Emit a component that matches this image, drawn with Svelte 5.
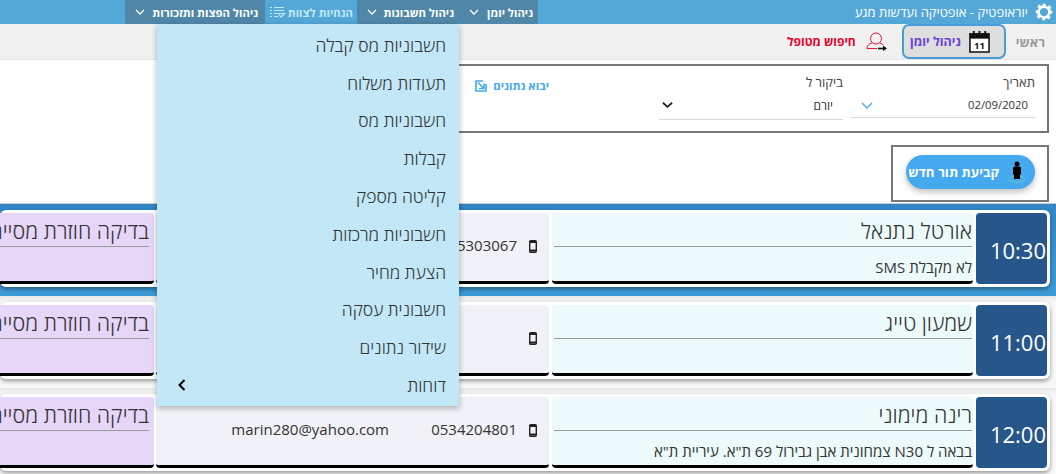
<script>
  const tabs = [
    { label: 'ניהול יומן', w: 79 },
    { label: 'ניהול חשבונות', w: 102 },
    { label: 'הנחיות לצוות', w: 92, light: true },
    { label: 'ניהול הפצות ותזכורות', w: 140 }
  ];
  const menu = ['חשבוניות מס קבלה','תעודות משלוח','חשבוניות מס','קבלות','קליטה מספק','חשבוניות מרכזות','הצעת מחיר','חשבונית עסקה','שידור נתונים','דוחות'];
  const rows = [
    { time: '10:30', name: 'אורטל נתנאל', note: 'לא מקבלת SMS', phone: '0545303067', mail: '', active: true },
    { time: '11:00', name: 'שמעון טייג', note: '', phone: '', mail: '' },
    { time: '12:00', name: 'רינה מימוני', note: 'בבאה ל N30 צמחונית אבן גבירול 69 ת"א. עיריית ת"א', phone: '0534204801', mail: 'marin280@yahoo.com' }
  ];
</script>

<div class="page">
  <header class="top">
    <div class="brand">
      <svg class="gear" viewBox="0 0 24 24" width="18" height="18"><path fill="#fff" fill-rule="evenodd" d="M10 1h4l.6 3.1 1.9.8 2.6-1.8 2.8 2.8-1.8 2.6.8 1.9L23 10v4l-3.1.6-.8 1.9 1.8 2.6-2.8 2.8-2.6-1.8-1.9.8L14 23h-4l-.6-3.1-1.9-.8-2.6 1.8-2.8-2.8 1.8-2.6-.8-1.9L1 14v-4l3.1-.6.8-1.9-1.8-2.6 2.8-2.8 2.6 1.8 1.9-.8zM12 6.500a5.500 5.500 0 1 0 0 11 5.500 5.500 0 0 0 0-11z"/></svg>
      <span>יוראופטיק - אופטיקה ועדשות מגע</span>
    </div>
    <nav class="tabs">
      {#each tabs as t}
        <div class="tab" class:light={t.light} style="width:{t.w}px">
          <span>{t.label}</span>
          {#if t.light}
            <svg viewBox="0 0 16 12" width="16" height="12"><path d="M0 1.5h2M4 1.5h10M0 4.5h2M4 4.5h10M0 7.5h2M4 7.5h10M0 10.5h2M4 10.5h4M9 9l2 2 4-4" fill="none" stroke="#c2e8f8" stroke-width="1.2"/></svg>
          {:else}
            <svg viewBox="0 0 10 6" width="10" height="6"><path d="M1 1l4 4 4-4" fill="none" stroke="#fff" stroke-width="1.3"/></svg>
          {/if}
        </div>
      {/each}
    </nav>
  </header>

  <div class="sub">
    <span class="home">ראשי</span>
    <div class="diary">
      <svg viewBox="0 0 22 24" width="21" height="23"><rect x="1" y="4" width="20" height="19" fill="#fff" stroke="#111" stroke-width="1.6"/><rect x="1" y="4" width="20" height="5" fill="#111"/><path d="M5 1v5M11 1v5M17 1v5" stroke="#111" stroke-width="2"/><text x="11" y="20" font-size="10" font-weight="700" text-anchor="middle" fill="#111" font-family="Open Sans">11</text></svg>
      <span>ניהול יומן</span>
    </div>
    <div class="find">
      <svg viewBox="0 0 21 19" width="21" height="19"><circle cx="10" cy="6.500" r="5.500" fill="none" stroke="#e8123c" stroke-width="1"/><path d="M1 16.500c0-3 2-4.500 5-5.500M14 11c1.500.5 2.500 1 3.500 2M1 16.500h10" fill="none" stroke="#e8123c" stroke-width="1"/><path d="M12 16.500h6" stroke="#111" stroke-width="1.600"/><path d="M17 13.500l4 3-4 2.500z" fill="#111"/></svg>
      <span>חיפוש מטופל</span>
    </div>
  </div>

  <section class="filter">
    <div class="field date">
      <label for="d">תאריך</label>
      <div class="val"><span class="ltr">02/09/2020</span><svg viewBox="0 0 12 7" width="12" height="7"><path d="M1 1l5 5 5-5" fill="none" stroke="#4aa8ec" stroke-width="1.400"/></svg></div>
    </div>
    <div class="field visit">
      <label for="d">ביקור ל</label>
      <div class="val"><span>יורם</span><svg viewBox="0 0 12 8" width="11" height="8"><path d="M1 1.500l5 4.500 5-4.500" fill="none" stroke="#222" stroke-width="2"/></svg></div>
    </div>
    <div class="import">
      <span>יבוא נתונים</span>
      <svg viewBox="0 0 12 12" width="12" height="12"><path d="M8 1H1v10h10V4" fill="none" stroke="#45a9f0" stroke-width="1.600"/><path d="M3 2.500l5.500 5.500M9 3.500v5H4" fill="none" stroke="#45a9f0" stroke-width="1.600"/></svg>
    </div>
  </section>

  <section class="newbox">
    <div class="pill">
      <svg viewBox="0 0 18 22" width="18" height="22"><ellipse cx="9" cy="18" rx="8" ry="3" fill="none" stroke="#6ec6c0" stroke-width=".8"/><circle cx="9" cy="3" r="2.500" fill="#000"/><path d="M5 7q0-1.500 2-1.500h4q2 0 2 1.500v6l-1 1v4H6v-4l-1-1z" fill="#000"/></svg>
      <span>קביעת תור חדש</span>
    </div>
  </section>

  <div class="list">
    {#each rows as r}
      <div class="row" class:active={r.active}>
        <div class="card">
          <div class="time">{r.time}</div>
          <div class="cell name">
            <div class="title">{r.name}</div>
            <div class="note">{r.note}</div>
          </div>
          <div class="cell contact">
            <svg viewBox="0 0 8 13" width="8" height="13"><rect x=".7" y=".7" width="6.600" height="11.600" rx="1" fill="none" stroke="#222" stroke-width="1.400"/><path d="M1 2h6M1 10.500h6" stroke="#222" stroke-width="1.800"/></svg>
            <span class="phone">{r.phone}</span>
            <span class="mail">{r.mail}</span>
          </div>
          <div class="cell kind">
            <div class="title">בדיקה חוזרת מסיים</div>
          </div>
        </div>
      </div>
    {/each}
  </div>

  <div class="menu">
    {#each menu as m, i}
      <div class="item">
        <span>{m}</span>
        {#if i === menu.length - 1}
          <svg viewBox="0 0 8 12" width="8" height="12"><path d="M6.500 1L1.500 6l5 5" fill="none" stroke="#000" stroke-width="2"/></svg>
        {/if}
      </div>
    {/each}
  </div>
</div>

<style>
  :global(body) { margin: 0; overflow: hidden; background: #fff; }
  .page {
    position: relative;
    width: 1056px;
    height: 474px;
    overflow: hidden;
    direction: rtl;
    font-family: "Open Sans", "Liberation Sans", "DejaVu Sans", sans-serif;
    color: #333;
  }
  .top {
    height: 24px;
    background: #54a8d8;
    display: flex;
    justify-content: space-between;
    align-items: stretch;
  }
  .brand {
    display: flex;
    align-items: center;
    gap: 7px;
    padding-right: 3px;
    color: #fff;
    font-size: 13px;
  }
  .tabs { display: flex; margin-left: 125px; }
  .tab {
    box-sizing: border-box;
    display: flex;
    align-items: center;
    justify-content: space-between;
    padding: 0 5px 0 10px;
    background: #5087a8;
    color: #fff;
    font-size: 11.3px;
    font-weight: 700;
    border-radius: 0 0 2px 2px;
    white-space: nowrap;
  }
  .tab:last-child { padding-right: 7px; }
  .tab.light { background: #54a8d8; color: #c2e8f8; padding: 0 4px 0 5px; }
  .sub {
    box-sizing: border-box;
    height: 36px;
    background: #f1f1f1;
    border-bottom: 1px solid #e4e4e4;
    display: flex;
    align-items: center;
    padding-right: 11px;
  }
  .home { font-size: 13px; font-weight: 700; color: #999; margin-left: 10px; }
  .diary {
    box-sizing: border-box;
    width: 104px;
    height: 35px;
    display: flex;
    align-items: center;
    gap: 8px;
    padding-right: 14px;
    border: 2px solid #4a9bd8;
    border-radius: 7px;
    background: #dedede;
    color: #6a3fe0;
    font-size: 12.5px;
    font-weight: 700;
  }
  .find {
    display: flex;
    align-items: center;
    gap: 10px;
    margin-right: 15px;
    color: #e8002a;
    font-size: 12px;
    font-weight: 700;
  }
  .filter {
    box-sizing: border-box;
    width: 749px;
    height: 69px;
    margin: 4px 7px 0 0;
    border: 2px solid #777;
    border-left: 0;
    display: flex;
    padding-right: 12px;
  }
  .field { width: 184px; margin-left: 8px; font-size: 13px; color: #444; }
  .field label { display: block; padding-top: 7px; line-height: 18px; }
  .val {
    display: flex;
    justify-content: space-between;
    align-items: center;
    box-sizing: border-box;
    height: 29px;
    border-bottom: 1px solid #d8d8d8;
    font-size: 12px;
    color: #333;
  }
  .date .val { height: 27px; padding: 0 7px 0 0; font-size: 11.3px; }
  .date .val svg { margin: 2px 10px 0 0; margin-left: 10px; margin-right: 0; }
  .visit .val { padding-right: 10px; }
  .visit .val svg { margin-left: 3px; }
  .ltr { direction: ltr; }
  .import {
    display: flex;
    align-self: flex-start;
    align-items: center;
    gap: 6px;
    margin: 12px 102px 0 0;
    color: #45a9f0;
    font-size: 11.4px;
    font-weight: 700;
  }
  .newbox {
    box-sizing: border-box;
    width: 158px;
    height: 57px;
    margin: 12px 7px 0 0;
    border: 2px solid #777;
    padding: 8px 12px;
  }
  .pill {
    width: 129px;
    height: 34px;
    border-radius: 17px;
    background: #45a9f0;
    box-shadow: 0 3px 6px rgba(0, 0, 0, .25);
    display: flex;
    align-items: center;
    gap: 9px;
    padding-right: 9px;
    box-sizing: border-box;
    color: #fff;
    font-size: 13.2px;
    font-weight: 700;
    white-space: nowrap;
  }
  .list { margin-top: 1px; border-top: 1px solid #ccc; }
  .row {
    box-sizing: border-box;
    height: 92px;
    padding: 6px 6px 0 0;
    background: linear-gradient(#e6e6e6, #f8f8f8 6px);
  }
  .row.active { background: linear-gradient(#2f86c4, #3f9ad8); }
  .card {
    box-sizing: border-box;
    height: 77px;
    padding: 3px;
    display: flex;
    gap: 3px;
    background: #fff;
    border-radius: 6px;
    box-shadow: 0 2px 4px rgba(0, 0, 0, .4);
  }
  .time {
    flex: none;
    width: 71px;
    height: 71px;
    background: #27578a;
    color: #fff;
    border-radius: 4px;
    font-size: 22px;
    line-height: 75px;
    direction: ltr;
    text-align: right;
    padding-right: 1px;
    box-sizing: border-box;
  }
  .cell {
    flex: none;
    box-sizing: border-box;
    height: 71px;
    border-bottom: 3px solid #000;
    border-radius: 4px;
  }
  .name { width: 421px; background: #edfafc; padding: 0 1px 0 2px; }
  .title {
    height: 33px;
    border-bottom: 1px solid #999;
    font-size: 21.500px;
    font-weight: 300;
    line-height: 36px;
    color: #333;
    white-space: nowrap;
  }
  .note { font-size: 15px; line-height: 20px; padding-top: 10px; color: #333; white-space: nowrap; }
  .contact {
    width: 393px;
    background: #f0f2f7;
    display: flex;
    align-items: flex-start;
    padding: 23px 12px 0 0;
    font-size: 15px;
  }
  .contact svg { margin-top: 4px; }
  .phone { margin-right: 12px; line-height: 18px; width: 85px; }
  .mail { margin-right: 43px; line-height: 18px; }
  .kind { width: 220px; margin-right: -1px; background: #e6d6f8; padding: 0 5px; }
  .menu {
    position: absolute;
    top: 24px;
    left: 157px;
    width: 302px;
    height: 382px;
    box-sizing: border-box;
    padding-top: 2px;
    background: #c2e8f8;
    box-shadow: 0 2px 6px rgba(0, 0, 0, .3);
  }
  .item {
    height: 37.8px;
    display: flex;
    align-items: center;
    justify-content: space-between;
    padding: 0 13px 0 21px;
    font-size: 17.500px;
    font-weight: 300;
    color: #333;
    box-sizing: border-box;
  }
</style>
